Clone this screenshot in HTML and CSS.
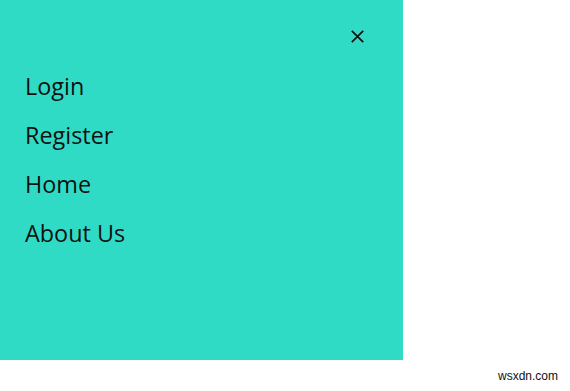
FILE: index.html
```html
<!DOCTYPE html>
<html>
<head>
<meta charset="utf-8">
<link rel="stylesheet" href="styles.css">
</head>
<body>
<div class="page">
  <nav class="sidenav">
    <div class="sidenav-top">
      <button class="close" aria-label="Close">
        <svg width="13" height="13" viewBox="0 0 13 13"><path d="M0.8 0.8 L12.2 12.2 M12.2 0.8 L0.8 12.2" stroke="#111" stroke-width="1.7" fill="none"/></svg>
      </button>
    </div>
    <ul class="menu">
      <li><a href="#">Login</a></li>
      <li><a href="#">Register</a></li>
      <li><a href="#">Home</a></li>
      <li><a href="#">About Us</a></li>
    </ul>
  </nav>
  <div class="footer"><span class="mark">wsxdn.com</span></div>
</div>
</body>
</html>
```
FILE: styles.css
```css
html, body {
  margin: 0;
  padding: 0;
  background: #ffffff;
}
.page {
  width: 570px;
  height: 391px;
  display: flex;
  flex-direction: column;
}
.sidenav {
  width: 403px;
  height: 360px;
  background: #30dbc6;
  box-sizing: border-box;
  display: flex;
  flex-direction: column;
}
.sidenav-top {
  display: flex;
  justify-content: flex-end;
  padding: 30px 39px 0 0;
}
.close {
  border: 0;
  background: none;
  padding: 0;
  margin: 0;
  width: 13px;
  height: 13px;
  display: block;
  cursor: pointer;
}
.close svg { display: block; }
.menu {
  list-style: none;
  margin: 0;
  padding: 28px 0 0 25px;
  display: flex;
  flex-direction: column;
}
.menu li {
  height: 49px;
}
.menu a {
  font-family: "Open Sans", "Noto Sans", sans-serif;
  font-size: 23.4px;
  line-height: 30px;
  color: #111;
  text-decoration: none;
}
.footer {
  flex: 1;
  display: flex;
  justify-content: flex-end;
  align-items: center;
  padding-right: 12px;
}
.mark {
  font-family: "Liberation Sans", Arial, sans-serif;
  font-size: 12px;
  color: #111;
}
```
